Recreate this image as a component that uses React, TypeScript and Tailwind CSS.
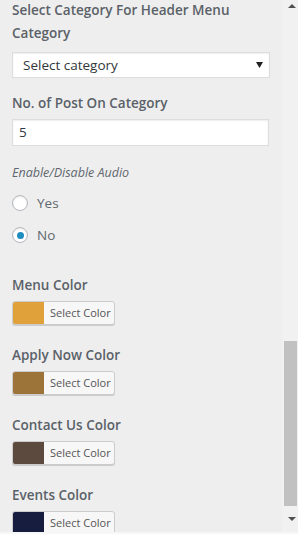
import React from 'react';

const font = { fontFamily: '"Open Sans", "Noto Sans", sans-serif' };

type Swatch = { label: string; color: string };

const swatches: Swatch[] = [
  { label: 'Menu Color', color: 'bg-[#e0a13b]' },
  { label: 'Apply Now Color', color: 'bg-[#9c7338]' },
  { label: 'Contact Us Color', color: 'bg-[#5c4a3e]' },
  { label: 'Events Color', color: 'bg-[#161d3f]' },
];

function Radio({ label, checked }: { label: string; checked?: boolean }) {
  return (
    <label className="flex h-[20px] items-center gap-[9px]">
      <span className="flex h-[16px] w-[16px] items-center justify-center rounded-full border border-[#b4b9be] bg-white shadow-[inset_0_1px_2px_rgba(0,0,0,0.1)]">
        {checked && <span className="h-[7px] w-[7px] rounded-full bg-[#1e8cbe]" />}
      </span>
      <span className="text-[13.5px] text-[#60676e]">{label}</span>
    </label>
  );
}

function ColorButton({ color }: { color: string }) {
  return (
    <div className="flex h-[24px] w-[103px] overflow-hidden rounded-[3px] border border-[#cccccc] bg-[#f7f7f7] shadow-[0_1px_0_#cccccc]">
      <span className={`w-[31px] ${color}`} />
      <span className="flex items-center pl-[6px] text-[11px] text-[#555555]">Select Color</span>
    </div>
  );
}

export default function App() {
  return (
    <div className="flex h-[534px] w-[298px] flex-col overflow-hidden bg-[#f4f4f4]" style={font}>
      <div className="flex h-[532px]">
        {/* Panel content */}
        <div className="h-full w-[282px] overflow-hidden bg-[#eeeeee] pl-3 pr-3">
          <h3 className="-mt-px text-[13.5px] font-semibold leading-[23px] text-[#5a6168]">
            Select Category For Header Menu Category
          </h3>
          <div className="mt-[7px] flex h-[26px] w-[258px] items-center justify-between border border-[#dddddd] bg-white pl-[10px] pr-[6px] shadow-[inset_0_1px_2px_rgba(0,0,0,0.07)]">
            <span className="text-[13.5px] text-[#32373c]">Select category</span>
            <svg width="7" height="6" viewBox="0 0 7 6">
              <path d="M0 0h7L3.5 6z" fill="#222" />
            </svg>
          </div>

          <h3 className="mt-[14px] text-[13.5px] font-semibold leading-[23px] text-[#5a6168]">
            No. of Post On Category
          </h3>
          <div className="mt-[4px] flex h-[27px] w-[257px] items-center border border-[#dddddd] bg-white pl-[6px] shadow-[inset_0_1px_2px_rgba(0,0,0,0.07)]">
            <span className="text-[13.5px] text-[#32373c]">5</span>
          </div>

          <p className="mt-[17px] text-[12.5px] italic leading-[20px] text-[#60676e]">Enable/Disable Audio</p>
          <div className="mt-[10px]">
            <Radio label="Yes" />
          </div>
          <div className="mt-[12px]">
            <Radio label="No" checked />
          </div>

          <div className="mt-[29px] flex flex-col gap-[19px]">
            {swatches.map((s) => (
              <div key={s.label}>
                <h3 className="text-[13.5px] font-semibold leading-[23px] text-[#5a6168]">{s.label}</h3>
                <div className="mt-[4px]">
                  <ColorButton color={s.color} />
                </div>
              </div>
            ))}
          </div>
        </div>

        {/* Scrollbar */}
        <div className="flex h-full w-[16px] flex-col items-center bg-[#f1f1f1]">
          <div className="flex h-[12px] w-full items-center justify-center pl-[3px]">
            <svg width="8" height="4" viewBox="0 0 8 4">
              <path d="M0 4h8L4 0z" fill="#505050" />
            </svg>
          </div>
          <div className="mt-[329px] mr-px h-[165px] w-[13px] self-end bg-[#c1c1c1]" />
          <div className="flex h-[26px] w-full items-center justify-center pl-[3px]">
            <svg width="8" height="4" viewBox="0 0 8 4">
              <path d="M0 0h8L4 4z" fill="#505050" />
            </svg>
          </div>
        </div>
      </div>
      <div className="h-[2px] w-full bg-[#f7f7f7]" />
    </div>
  );
}
